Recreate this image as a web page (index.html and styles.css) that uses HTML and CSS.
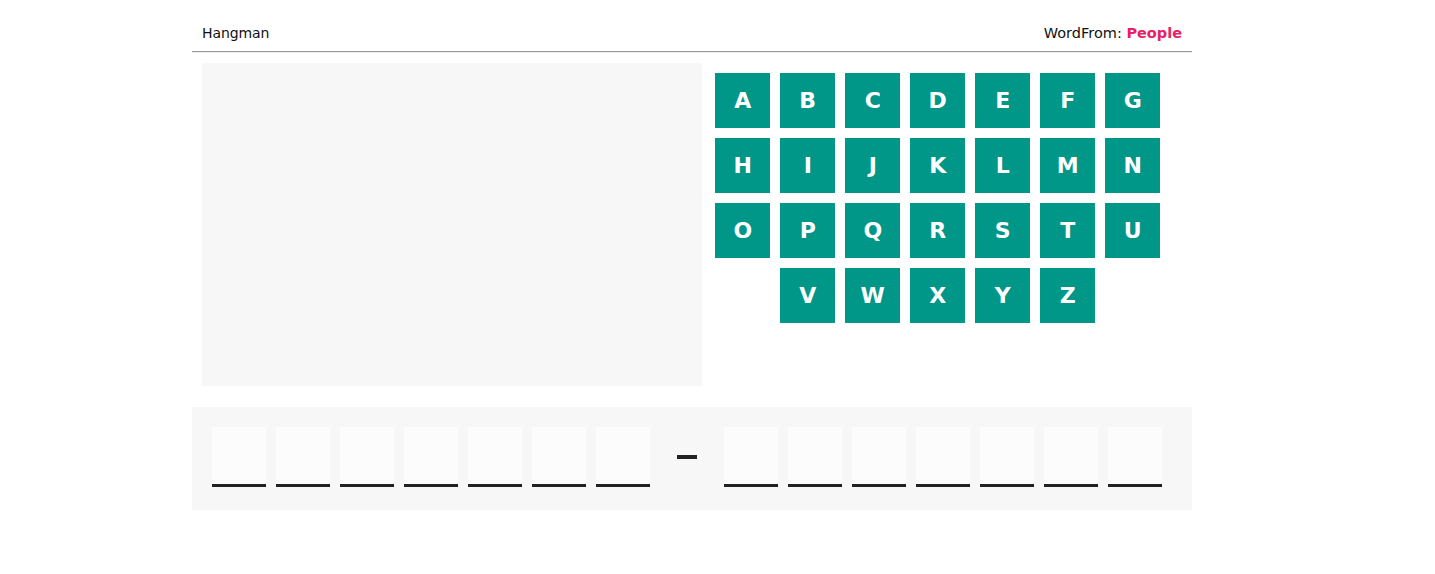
FILE: index.html
```html
<!DOCTYPE html>
<html>
<head>
<meta charset="utf-8">
<link rel="stylesheet" href="styles.css">
</head>
<body>
<div class="app">
  <header class="top">
    <span class="title">Hangman</span>
    <span class="from">WordFrom: <b class="cat">People</b></span>
  </header>
  <div class="main">
    <div class="stage"></div>
    <div class="keys">
      <button class="key">A</button><button class="key">B</button><button class="key">C</button><button class="key">D</button><button class="key">E</button><button class="key">F</button><button class="key">G</button>
      <button class="key">H</button><button class="key">I</button><button class="key">J</button><button class="key">K</button><button class="key">L</button><button class="key">M</button><button class="key">N</button>
      <button class="key">O</button><button class="key">P</button><button class="key">Q</button><button class="key">R</button><button class="key">S</button><button class="key">T</button><button class="key">U</button>
      <button class="key">V</button><button class="key">W</button><button class="key">X</button><button class="key">Y</button><button class="key">Z</button>
    </div>
  </div>
  <div class="word">
    <span class="slot"></span><span class="slot"></span><span class="slot"></span><span class="slot"></span><span class="slot"></span><span class="slot"></span><span class="slot"></span>
    <span class="dash"><i class="dash-bar"></i></span>
    <span class="slot"></span><span class="slot"></span><span class="slot"></span><span class="slot"></span><span class="slot"></span><span class="slot"></span><span class="slot"></span>
  </div>
</div>
</body>
</html>
```
FILE: styles.css
```css
* { box-sizing: border-box; }
body {
  margin: 0;
  background: #fff;
  font-family: "DejaVu Sans", Verdana, sans-serif;
  color: #111;
}
.app {
  width: 1000px;
  margin-left: 192px;
  padding-top: 23px;
}
.top {
  display: flex;
  justify-content: space-between;
  align-items: center;
  height: 29px;
  padding: 0 10px 9px 10px;
  border-bottom: 1px solid #999;
  box-shadow: 0 1px 0 #eee;
  font-size: 14px;
}
.title { letter-spacing: -0.1px; }
.from { font-size: 14.5px; }
.cat {
  color: #e91e63;
  font-weight: bold;
  font-size: 14.5px;
}
.main {
  display: flex;
  padding: 11px 10px 0 10px;
}
.stage {
  width: 500px;
  height: 323px;
  background: #f7f7f7;
}
.keys {
  width: 455px;
  margin-left: 8px;
  padding-top: 5px;
  display: flex;
  flex-wrap: wrap;
  justify-content: center;
  align-content: flex-start;
}
.key {
  width: 55px;
  height: 55px;
  margin: 5px;
  border: 0;
  padding: 0;
  background: #009688;
  color: #fff;
  font-family: "DejaVu Sans", Verdana, sans-serif;
  font-weight: bold;
  font-size: 22px;
  letter-spacing: -0.5px;
}
.word {
  margin-top: 21px;
  height: 103px;
  background: #f7f7f7;
  display: flex;
  gap: 10px;
  padding: 20px 20px 0 20px;
}
.slot {
  width: 54px;
  height: 60px;
  background: #fcfcfc;
  border-bottom: 3px solid #222;
}
.dash {
  width: 54px;
  height: 60px;
  display: flex;
  justify-content: center;
  padding-top: 28px;
}
.dash-bar {
  display: block;
  width: 20px;
  height: 4px;
  background: #222;
}
```
